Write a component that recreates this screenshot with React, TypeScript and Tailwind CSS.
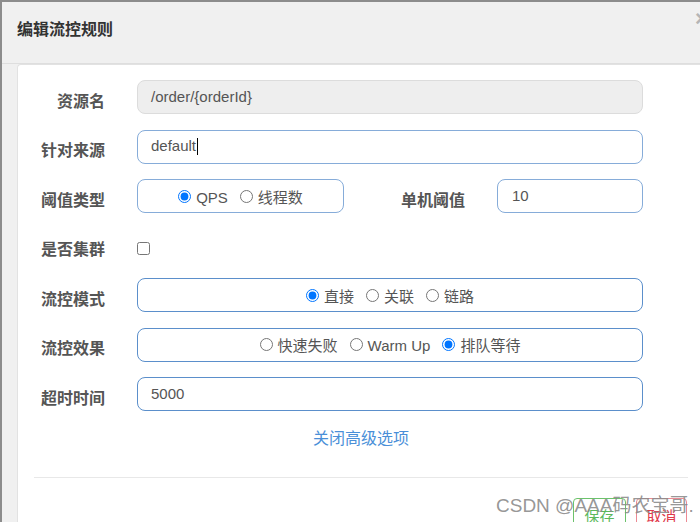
import React from "react";

const font = { fontFamily: '"Liberation Sans", "Noto Sans CJK SC", sans-serif' };

function Label({ children, w = "w-[71px]" }: { children: React.ReactNode; w?: string }) {
  return (
    <div className={`${w} shrink-0 text-right text-[16px] font-bold text-[#555] mt-[9px] leading-[22px]`}>
      {children}
    </div>
  );
}

function Radio({ checked, label, name }: { checked?: boolean; label: string; name: string }) {
  return (
    <label className="flex items-center gap-[5px] text-[15px] text-[#555]">
      <input
        type="radio"
        name={name}
        defaultChecked={checked}
        className="m-0 w-[13px] h-[13px] accent-[#0075ff]"
      />
      <span className="leading-[20px] mt-[3px]">{label}</span>
    </label>
  );
}

function RadioBox({ w, items, name, border = "border-[#5b8fcb]" }: { w: string; items: { label: string; checked?: boolean }[]; name: string; border?: string }) {
  return (
    <div className={`${w} h-[34px] rounded-[8px] border ${border} bg-white flex items-center justify-center gap-[12px]`}>
      {items.map((it) => (
        <Radio key={it.label} name={name} label={it.label} checked={it.checked} />
      ))}
    </div>
  );
}

export default function App() {
  return (
    <div
      className="relative w-[700px] h-[522px] overflow-hidden bg-[#f0f0f0] border-l-2 border-t-2 border-[#8c8c8c]"
      style={font}
    >
      {/* header */}
      <div className="h-[62px] border-b border-[#dedede] pl-[15px] pt-[17px]">
        <div className="text-[16px] font-bold text-[#333] leading-[22px]">编辑流控规则</div>
      </div>
      <div className="absolute left-[693px] top-[5px] text-[22px] font-bold text-[#b5b5b5] leading-[24px]">×</div>

      {/* body */}
      <div className="ml-[15px] h-[460px] bg-white rounded-tl-[4px] border-l border-t border-[#e2e2e2] pl-[16px] pr-[12px] pt-[15px]">
        <div className="flex flex-col gap-[15.5px]">
          {/* row 1 */}
          <div className="flex items-center h-[34px]">
            <Label>资源名</Label>
            <div className="ml-[32px] w-[506px] h-[34px] rounded-[8px] border border-[#dcdcdc] bg-[#eeeeee] flex items-center pl-[13px] text-[15px] text-[#555]">
              /order/{"{orderId}"}
            </div>
          </div>
          {/* row 2 */}
          <div className="flex items-center h-[34px]">
            <Label>针对来源</Label>
            <div className="ml-[32px] w-[506px] h-[34px] rounded-[8px] border border-[#86acd9] bg-white flex items-center pl-[13px] text-[15px] text-[#555]">
              default<span className="inline-block w-[1px] h-[17px] bg-black ml-[1px]" />
            </div>
          </div>
          {/* row 3 */}
          <div className="flex items-center h-[34px]">
            <Label>阈值类型</Label>
            <div className="ml-[32px]">
              <RadioBox
                w="w-[207px]"
                name="grade"
                border="border-[#86acd9]"
                items={[{ label: "QPS", checked: true }, { label: "线程数" }]}
              />
            </div>
            <Label w="w-[121px]">单机阈值</Label>
            <div className="ml-[32px] w-[146px] h-[34px] rounded-[8px] border border-[#86acd9] bg-white flex items-center pl-[14px] text-[15px] text-[#555]">
              10
            </div>
          </div>
          {/* row 4 */}
          <div className="flex items-center h-[34px]">
            <Label>是否集群</Label>
            <div className="ml-[32px] flex items-center mt-[5px]">
              <input type="checkbox" className="m-0 w-[13px] h-[13px]" />
            </div>
          </div>
          {/* row 5 */}
          <div className="flex items-center h-[34px]">
            <Label>流控模式</Label>
            <div className="ml-[32px]">
              <RadioBox
                w="w-[506px]"
                name="strategy"
                items={[{ label: "直接", checked: true }, { label: "关联" }, { label: "链路" }]}
              />
            </div>
          </div>
          {/* row 6 */}
          <div className="flex items-center h-[34px]">
            <Label>流控效果</Label>
            <div className="ml-[32px]">
              <RadioBox
                w="w-[506px]"
                name="behavior"
                items={[{ label: "快速失败" }, { label: "Warm Up" }, { label: "排队等待", checked: true }]}
              />
            </div>
          </div>
          {/* row 7 */}
          <div className="flex items-center h-[34px]">
            <Label>超时时间</Label>
            <div className="ml-[32px] w-[506px] h-[34px] rounded-[8px] border border-[#5b8fcb] bg-white flex items-center pl-[13px] text-[15px] text-[#555]">
              5000
            </div>
          </div>
        </div>

        <div className="mt-[17px] text-center text-[16px] leading-[22px] text-[#4a8fd8]">关闭高级选项</div>

        <div className="mt-[27px] h-px bg-[#e8e8e8]" />

        <div className="mt-[20px] flex justify-end gap-[10px] pr-[1px]">
          <div className="w-[53px] h-[34px] rounded-[4px] border border-[#6cc26c] flex items-center justify-center text-[15px] text-[#5cb85c] pt-[4px]">
            保存
          </div>
          <div className="w-[51px] h-[34px] rounded-[4px] border border-[#ec8a94] flex items-center justify-center text-[15px] text-[#e0394a] pt-[4px]">
            取消
          </div>
        </div>
      </div>

      <div className="absolute left-[494px] top-[491px] text-[19px] leading-[26px] text-[#8a8a8a]/90 whitespace-nowrap">
        CSDN @AAA码农宝哥.
      </div>
    </div>
  );
}
